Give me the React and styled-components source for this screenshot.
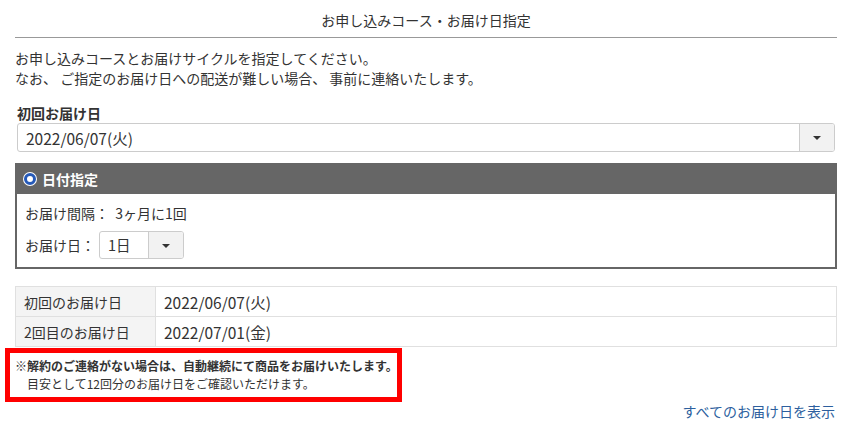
import React from "react";
import styled, { createGlobalStyle } from "styled-components";

const Global = createGlobalStyle`
  html, body { margin: 0; padding: 0; background: #fff; }
  body {
    font-family: "Noto Sans CJK JP", "Noto Sans", sans-serif;
    color: #333;
    -webkit-font-smoothing: antialiased;
  }
  * { box-sizing: border-box; }
`;

const Page = styled.div`
  width: 850px;
  padding: 10px 13px 0 15px;
`;

const Title = styled.h2`
  margin: 0;
  font-size: 14px;
  font-weight: normal;
  line-height: 20px;
  text-align: center;
  padding-bottom: 7px;
  border-bottom: 1px solid #999;
`;

const Intro = styled.p`
  margin: 10px 0 0;
  font-size: 14px;
  line-height: 20px;
  white-space: pre-wrap;
`;

const FieldLabel = styled.div`
  margin: 15px 0 0 2px;
  font-size: 14px;
  font-weight: bold;
  line-height: 20px;
`;

const Select = styled.div`
  display: flex;
  align-items: stretch;
  height: ${(p) => p.$h}px;
  width: ${(p) => (p.$w ? `${p.$w}px` : "auto")};
  margin: ${(p) => p.$m || "0"};
  border: 1px solid #ccc;
  border-radius: 3px;
  background: #fff;
  overflow: hidden;
`;

const SelectValue = styled.div`
  flex: 1;
  display: flex;
  align-items: center;
  padding-left: ${(p) => p.$pl}px;
  font-size: ${(p) => p.$fs}px;
  color: #333;
`;

const SelectButton = styled.div`
  width: ${(p) => p.$w}px;
  display: flex;
  align-items: center;
  justify-content: center;
  background: #f2f2f2;
  border-left: 1px solid #ccc;
`;

const Caret = styled.span`
  width: 0;
  height: 0;
  border-left: 4px solid transparent;
  border-right: 4px solid transparent;
  border-top: 4px solid #333;
  margin-top: 1px;
`;

const Panel = styled.div`
  margin-top: 11px;
  border: 2px solid #666;
  border-top: none;
`;

const PanelHead = styled.div`
  height: 31px;
  background: #666;
  color: #fff;
  display: flex;
  align-items: center;
  gap: 6px;
  padding-left: 9px;
  margin: 0 -2px;
  font-size: 14px;
  font-weight: bold;
`;

const Radio = styled.span`
  width: 12px;
  height: 12px;
  border-radius: 50%;
  background: #fff;
  border: 3px solid #2559b8;
  box-shadow: 0 0 0 1px #fff;
`;

const PanelBody = styled.div`
  padding: 9px 8px 8px;
  display: flex;
  flex-direction: column;
  gap: 8px;
  background: #fff;
`;

const Line = styled.div`
  display: flex;
  align-items: center;
  font-size: 14px;
  line-height: 20px;
  gap: 4px;
  white-space: pre;
`;

const Table = styled.table`
  margin-top: 17px;
  width: 100%;
  border-collapse: collapse;
  font-size: 14px;
  td {
    border: 1px solid #e0e0e0;
    height: 30px;
    padding: 0 0 0 8px;
    line-height: 20px;
  }
`;

const LabelCell = styled.td`
  width: 140px;
  background: #f4f4f4;
`;

const ValueCell = styled.td`
  font-size: 15.5px;
`;

const Note = styled.div`
  display: inline-block;
  margin: 1px 0 0 -10px;
  border: 5px solid #f00;
  padding: 4px 5px;
  width: 397px;
  font-size: 12px;
  line-height: 18px;
  white-space: nowrap;
`;

const NoteStrong = styled.div`
  font-weight: bold;
`;

const NoteSub = styled.div`
  padding-left: 12px;
`;

const LinkRow = styled.div`
  display: flex;
  justify-content: flex-end;
  padding-right: 2px;
`;

const Link = styled.a`
  color: #2d5f9e;
  text-decoration: none;
  font-size: 14px;
  line-height: 18px;
`;

export default function App() {
  return (
    <>
      <Global />
      <Page>
        <Title>お申し込みコース・お届け日指定</Title>
        <Intro>
          お申し込みコースとお届けサイクルを指定してください。
          <br />
          {"なお、 ご指定のお届け日への配送が難しい場合、 事前に連絡いたします。"}
        </Intro>
        <FieldLabel>初回お届け日</FieldLabel>
        <Select $h={29} $m="0 2px">
          <SelectValue $pl={8} $fs={15.5}>2022/06/07(火)</SelectValue>
          <SelectButton $w={35}>
            <Caret />
          </SelectButton>
        </Select>
        <Panel>
          <PanelHead>
            <Radio />
            日付指定
          </PanelHead>
          <PanelBody>
            <Line>{"お届け間隔：  3ヶ月に1回"}</Line>
            <Line>
              お届け日：
              <Select $h={28} $w={85}>
                <SelectValue $pl={8} $fs={14.5}>1日</SelectValue>
                <SelectButton $w={35}>
                  <Caret />
                </SelectButton>
              </Select>
            </Line>
          </PanelBody>
        </Panel>
        <Table>
          <tbody>
            <tr>
              <LabelCell>初回のお届け日</LabelCell>
              <ValueCell>2022/06/07(火)</ValueCell>
            </tr>
            <tr>
              <LabelCell>2回目のお届け日</LabelCell>
              <ValueCell>2022/07/01(金)</ValueCell>
            </tr>
          </tbody>
        </Table>
        <Note>
          <NoteStrong>※解約のご連絡がない場合は、自動継続にて商品をお届けいたします。</NoteStrong>
          <NoteSub>目安として12回分のお届け日をご確認いただけます。</NoteSub>
        </Note>
        <LinkRow>
          <Link href="#">すべてのお届け日を表示</Link>
        </LinkRow>
      </Page>
    </>
  );
}
